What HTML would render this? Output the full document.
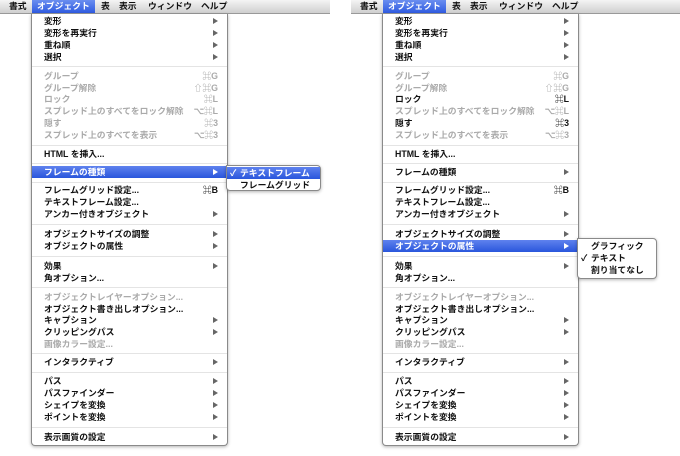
<!DOCTYPE html>
<html><head><meta charset="utf-8"><style>
*{margin:0;padding:0;box-sizing:border-box}
body{width:680px;height:456px;background:#fff;position:relative;overflow:hidden;font-family:"Liberation Sans","Noto Sans CJK JP",sans-serif;font-size:8.8px;color:#111;font-weight:bold}
.bar{position:absolute;top:0;height:14px;background:linear-gradient(#f4f4f4,#cfcfcf);border-bottom:1px solid #999}
.bar span{position:absolute;top:0;line-height:13px;font-size:8.8px;white-space:nowrap}
.bar .hl{background:linear-gradient(#6a8ef0,#2f5be0);color:#fff;padding:0 5px}
.m{position:absolute;top:14px;width:197px;height:432px;background:#fff;border:1px solid #8a8a8a;border-top:none;border-radius:0 0 4px 4px;box-shadow:0 1px 3px rgba(0,0,0,.3)}
.r{position:absolute;left:0;width:100%;height:12px;line-height:12px;padding-left:12px;white-space:nowrap}
.d{color:#aaa}
.a::after{content:"";position:absolute;right:9px;top:3px;border-left:5px solid #666;border-top:3px solid transparent;border-bottom:3px solid transparent}
.k{position:absolute;right:9px;top:0}
.s{position:absolute;left:0;width:100%;height:1px;background:#e4e4e4}
.sel{background:linear-gradient(#5f82ee,#2a56dc);color:#fff}
.sel.a::after{border-left-color:#fff}
.sub{position:absolute;background:#fff;border:1px solid #8a8a8a;border-radius:0 4px 4px 4px;box-shadow:0 1px 3px rgba(0,0,0,.3)}
.sub .r{padding-left:13px}
.ck{position:absolute;left:3px}
</style></head><body>

<div class="bar" style="left:0;width:330px">
<span style="left:9px">書式</span><span class="hl" style="left:32px">オブジェクト</span><span style="left:101px">表</span><span style="left:119px">表示</span><span style="left:148px">ウィンドウ</span><span style="left:201px">ヘルプ</span>
</div>
<div class="bar" style="left:351px;width:329px">
<span style="left:9px">書式</span><span class="hl" style="left:32px">オブジェクト</span><span style="left:101px">表</span><span style="left:119px">表示</span><span style="left:148px">ウィンドウ</span><span style="left:201px">ヘルプ</span>
</div>

<!-- LEFT -->
<div class="m" style="left:31px">
<div class="r a" style="top:1px">変形</div>
<div class="r a" style="top:13px">変形を再実行</div>
<div class="r a" style="top:25px">重ね順</div>
<div class="r a" style="top:37px">選択</div>
<div class="s" style="top:52px"></div>
<div class="r d" style="top:56px">グループ<span class="k">⌘G</span></div>
<div class="r d" style="top:68px">グループ解除<span class="k">⇧⌘G</span></div>
<div class="r d" style="top:79px">ロック<span class="k">⌘L</span></div>
<div class="r d" style="top:91px">スプレッド上のすべてをロック解除<span class="k">⌥⌘L</span></div>
<div class="r d" style="top:103px">隠す<span class="k">⌘3</span></div>
<div class="r d" style="top:115px">スプレッド上のすべてを表示<span class="k">⌥⌘3</span></div>
<div class="s" style="top:131px"></div>
<div class="r" style="top:134px">HTML を挿入...</div>
<div class="s" style="top:149px"></div>
<div class="r a sel" style="top:152px">フレームの種類</div>
<div class="s" style="top:168px"></div>
<div class="r" style="top:170px">フレームグリッド設定...<span class="k">⌘B</span></div>
<div class="r" style="top:182px">テキストフレーム設定...</div>
<div class="r a" style="top:194px">アンカー付きオブジェクト</div>
<div class="s" style="top:210px"></div>
<div class="r a" style="top:214px">オブジェクトサイズの調整</div>
<div class="r a" style="top:226px">オブジェクトの属性</div>
<div class="s" style="top:242px"></div>
<div class="r a" style="top:246px">効果</div>
<div class="r" style="top:258px">角オプション...</div>
<div class="s" style="top:273px"></div>
<div class="r d" style="top:277px">オブジェクトレイヤーオプション...</div>
<div class="r" style="top:289px">オブジェクト書き出しオプション...</div>
<div class="r a" style="top:300px">キャプション</div>
<div class="r a" style="top:312px">クリッピングパス</div>
<div class="r d" style="top:324px">画像カラー設定...</div>
<div class="s" style="top:339px"></div>
<div class="r a" style="top:342px">インタラクティブ</div>
<div class="s" style="top:358px"></div>
<div class="r a" style="top:361px">パス</div>
<div class="r a" style="top:373px">パスファインダー</div>
<div class="r a" style="top:385px">シェイプを変換</div>
<div class="r a" style="top:397px">ポイントを変換</div>
<div class="s" style="top:413px"></div>
<div class="r a" style="top:417px">表示画質の設定</div>
</div>
<div class="sub" style="left:226px;top:165px;width:95px;height:26px">
<div class="r sel" style="top:1px"><span class="ck">✓</span>テキストフレーム</div>
<div class="r" style="top:13px">フレームグリッド</div>
</div>

<!-- RIGHT -->
<div class="m" style="left:382px">
<div class="r a" style="top:1px">変形</div>
<div class="r a" style="top:13px">変形を再実行</div>
<div class="r a" style="top:25px">重ね順</div>
<div class="r a" style="top:37px">選択</div>
<div class="s" style="top:52px"></div>
<div class="r d" style="top:56px">グループ<span class="k">⌘G</span></div>
<div class="r d" style="top:68px">グループ解除<span class="k">⇧⌘G</span></div>
<div class="r" style="top:79px">ロック<span class="k">⌘L</span></div>
<div class="r d" style="top:91px">スプレッド上のすべてをロック解除<span class="k">⌥⌘L</span></div>
<div class="r" style="top:103px">隠す<span class="k">⌘3</span></div>
<div class="r d" style="top:115px">スプレッド上のすべてを表示<span class="k">⌥⌘3</span></div>
<div class="s" style="top:131px"></div>
<div class="r" style="top:134px">HTML を挿入...</div>
<div class="s" style="top:149px"></div>
<div class="r a" style="top:152px">フレームの種類</div>
<div class="s" style="top:168px"></div>
<div class="r" style="top:170px">フレームグリッド設定...<span class="k">⌘B</span></div>
<div class="r" style="top:182px">テキストフレーム設定...</div>
<div class="r a" style="top:194px">アンカー付きオブジェクト</div>
<div class="s" style="top:210px"></div>
<div class="r a" style="top:214px">オブジェクトサイズの調整</div>
<div class="r a sel" style="top:226px">オブジェクトの属性</div>
<div class="s" style="top:242px"></div>
<div class="r a" style="top:246px">効果</div>
<div class="r" style="top:258px">角オプション...</div>
<div class="s" style="top:273px"></div>
<div class="r d" style="top:277px">オブジェクトレイヤーオプション...</div>
<div class="r" style="top:289px">オブジェクト書き出しオプション...</div>
<div class="r a" style="top:300px">キャプション</div>
<div class="r a" style="top:312px">クリッピングパス</div>
<div class="r d" style="top:324px">画像カラー設定...</div>
<div class="s" style="top:339px"></div>
<div class="r a" style="top:342px">インタラクティブ</div>
<div class="s" style="top:358px"></div>
<div class="r a" style="top:361px">パス</div>
<div class="r a" style="top:373px">パスファインダー</div>
<div class="r a" style="top:385px">シェイプを変換</div>
<div class="r a" style="top:397px">ポイントを変換</div>
<div class="s" style="top:413px"></div>
<div class="r a" style="top:417px">表示画質の設定</div>
</div>
<div class="sub" style="left:577px;top:238px;width:80px;height:41px">
<div class="r" style="top:1px">グラフィック</div>
<div class="r" style="top:13px"><span class="ck">✓</span>テキスト</div>
<div class="r" style="top:25px">割り当てなし</div>
</div>
</body></html>
